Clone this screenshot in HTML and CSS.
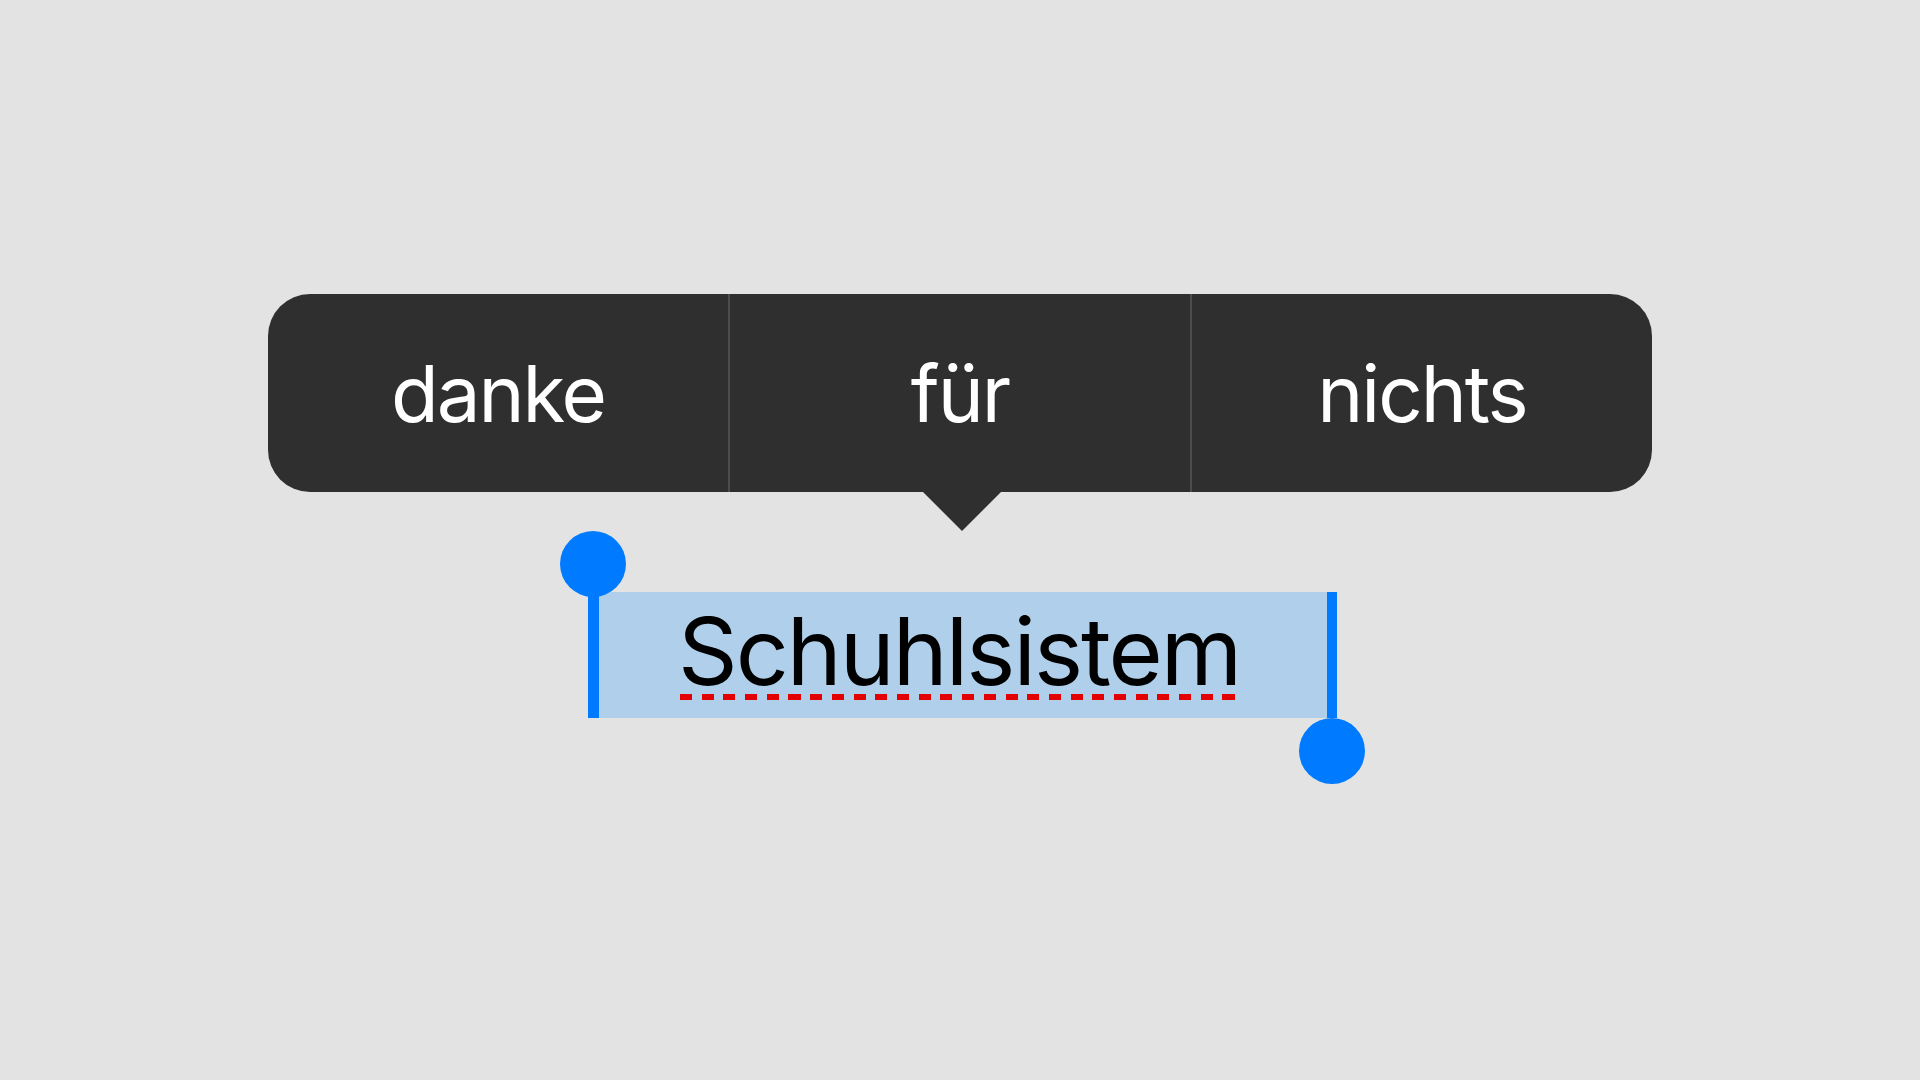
FILE: index.html
```html
<!DOCTYPE html>
<html lang="de">
<head>
	<meta charset="UTF-8">
	<title>Textauswahl</title>
	<link rel="stylesheet" href="styles.css">
</head>
<body>
	<div class="menu">
		<div class="item">danke</div>
		<div class="item">für</div>
		<div class="item">nichts</div>
		<span class="arrow"></span>
	</div>

	<div class="selection">
		<span class="handle handle-start"></span>
		<span class="word">Schuhlsistem</span>
		<span class="handle handle-end"></span>
	</div>
</body>
</html>
```

FILE: styles.css
```css
*, *:before, *:after {
	box-sizing: border-box;
}
html, body {
	margin: 0;
	height: 100%;
}
body {
	background: #e3e3e3;
	font-family: 'Inter', 'Liberation Sans', sans-serif;
	display: flex;
	flex-direction: column;
	align-items: center;
	padding-top: 294px;
}
.menu {
	position: relative;
	width: 1384px;
	height: 198px;
	background: #2f2f2f;
	border-radius: 42px;
	display: flex;
}
.item {
	flex: 1;
	display: flex;
	align-items: center;
	justify-content: center;
	color: #fff;
	font-size: 78px;
	letter-spacing: -2px;
	line-height: 1;
	padding-top: 2px;
}
.item + .item {
	border-left: 2px solid #4c4c4c;
}
.arrow {
	position: absolute;
	left: 50%;
	top: 100%;
	width: 0;
	height: 0;
	margin-left: -37px;
	border-left: 39px solid transparent;
	border-right: 39px solid transparent;
	border-top: 39px solid #2f2f2f;
}
.selection {
	position: relative;
	margin-top: 100px;
	margin-left: 5px;
	width: 749px;
	height: 126px;
	background: #afcfea;
	border-left: 11px solid #007aff;
	border-right: 10px solid #007aff;
	padding-left: 79px;
	padding-top: 13px;
}
.word {
	position: relative;
	display: inline-block;
	font-size: 93px;
	letter-spacing: -2px;
	line-height: 1;
	color: #000;
}
.word::after {
	content: "";
	position: absolute;
	left: 2px;
	right: 0;
	top: 89px;
	height: 6px;
	background: repeating-linear-gradient(90deg, #e20000 0 12px, transparent 12px 21.7px);
}
.handle {
	position: absolute;
	width: 66px;
	height: 66px;
	border-radius: 50%;
	background: #007aff;
}
.handle-start {
	left: -39px;
	top: -61px;
}
.handle-end {
	right: -38px;
	bottom: -66px;
}
```
